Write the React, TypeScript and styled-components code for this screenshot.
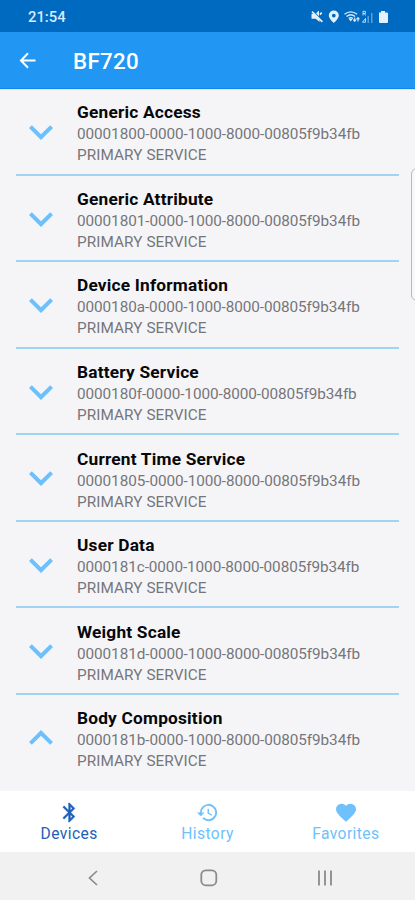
import React from "react";
import styled, { createGlobalStyle } from "styled-components";

const GlobalStyle = createGlobalStyle`
  * { box-sizing: border-box; }
  body { margin: 0; background: #f5f5f8; font-family: Roboto, sans-serif; }
`;

const Screen = styled.div`
  position: relative;
  width: 415px;
  height: 900px;
  overflow: hidden;
  display: flex;
  flex-direction: column;
  background: #f5f5f8;
`;

const StatusBar = styled.header`
  height: 32px;
  flex: none;
  display: flex;
  align-items: center;
  justify-content: space-between;
  padding: 2px 25px 0 28px;
  background: #0069c0;
  color: #d9ecff;
`;

const Clock = styled.span`
  font-size: 14.8px;
  font-weight: 500;
`;

const AppBar = styled.div`
  height: 57px;
  flex: none;
  display: flex;
  align-items: center;
  gap: 37px;
  padding: 2px 0 0 19px;
  background: #2196f3;
  border-bottom: 1px solid #1188ed;
  color: #fff;
`;

const Heading = styled.h1`
  margin: 0;
  font-size: 22.3px;
  line-height: 26px;
  font-weight: 500;
  letter-spacing: 0.3px;
`;

const List = styled.main`
  flex: 1;
  padding: 0 16px;
  border-top: 1px solid #d8e6f8;
`;

const ServiceRow = styled.section<{ $last?: boolean }>`
  height: 86.55px;
  display: flex;
  align-items: flex-start;
  padding-top: 11px;
  border-bottom: ${(p) => (p.$last ? "none" : "2px solid #a3d3f4")};

  &:first-child {
    height: 85.7px;
    padding-top: 10.2px;
  }
`;

const Toggle = styled.div`
  width: 61px;
  padding: 8px 0 0 1px;
  flex: none;
  svg { display: block; }
`;

const ServiceText = styled.div`
  padding-top: 1.2px;
`;

const Name = styled.div`
  font-size: 17.3px;
  line-height: 23px;
  font-weight: 700;
  letter-spacing: 0.2px;
  color: #08080a;
  white-space: nowrap;
`;

const Detail = styled.div<{ $spacing: number }>`
  font-size: 15.3px;
  line-height: 21px;
  letter-spacing: ${(p) => p.$spacing}px;
  color: #75767a;
  white-space: nowrap;
`;

const EdgeHandle = styled.div`
  position: absolute;
  left: 411px;
  top: 168px;
  width: 12px;
  height: 133px;
  border: 1px solid #b9b9bc;
  border-radius: 6px;
  background: #f8f8f9;
`;

const Tabs = styled.nav`
  height: 61px;
  flex: none;
  display: grid;
  grid-template-columns: repeat(3, 1fr);
  background: #fff;
`;

const Tab = styled.div<{ $active?: boolean }>`
  display: flex;
  flex-direction: column;
  align-items: center;
  padding-top: 10px;
  color: ${(p) => (p.$active ? "#2160b8" : "#6fc1fb")};
`;

const TabLabel = styled.span`
  font-size: 15.6px;
  line-height: 20px;
  letter-spacing: 0.42px;
`;

const SystemNav = styled.footer`
  height: 48px;
  flex: none;
  display: flex;
  align-items: center;
  justify-content: space-between;
  padding: 3px 81px 0 84px;
  background: #f1f1f1;
  color: #8b8b8b;
`;

const services = [
  ["Generic Access", "00001800"],
  ["Generic Attribute", "00001801"],
  ["Device Information", "0000180a"],
  ["Battery Service", "0000180f"],
  ["Current Time Service", "00001805"],
  ["User Data", "0000181c"],
  ["Weight Scale", "0000181d"],
  ["Body Composition", "0000181b"],
];

const Chevron = ({ up }: { up: boolean }) => (
  <svg width="48" height="48" viewBox="0 0 24 24" fill="#6cc0fb">
    {up ? (
      <path d="M7.41 15.41 12 10.83l4.59 4.58L18 14l-6-6-6 6z" />
    ) : (
      <path d="M7.41 8.59 12 13.17l4.59-4.58L18 10l-6 6-6-6z" />
    )}
  </svg>
);

const StatusIcons = () => (
  <svg width="80" height="16" viewBox="0 0 80 16" fill="#e3f1ff" stroke="none">
    <path d="M1.5 5h3.5l4.5 4.5V13L5.7 9.8H1.5zM6 4.2 9 1.6v5.6z" />
    <path d="m2 2.6 10.4 10.2M9.9 5.6l1.8-2" stroke="#e3f1ff" strokeWidth="1.7" />
    <path fillRule="evenodd" d="M23.8 1.5a5 5 0 0 0-5 5c0 3.4 5 7.5 5 7.5s5-4.1 5-7.5a5 5 0 0 0-5-5m0 3.2a1.9 1.9 0 1 1 0 3.8 1.9 1.9 0 0 1 0-3.8" />
    <g fill="none" stroke="#d4eaff" strokeWidth="1.4">
      <path d="M34.5 5.2q6.3-4.7 12.6 0M36.5 7.5q4.3-3.4 8.6 0M38.7 9.6q2-1.8 4.2 0" />
      <path d="M44.7 12V8.5M43.3 10.7l1.4 1.6 1.4-1.6M48 12.4V9M46.6 10.3 48 8.7l1.4 1.6" strokeWidth="1.1" />
    </g>
    <path d="m38.8 10 2 2.5 1.7-2.5z" />
    <path d="M53 6.5V2.3h2.4v2.2H53M55.5 6.5l-1-2M52.5 13.2h3V9.5z" fill="none" stroke="#bcdcfa" />
    <path d="M57.5 7h1.5v7h-1.5zM61 4h1.5v10H61z" opacity=".4" />
    <path d="M69 3.5h2V2h4v1.5h2q1 0 1 1V13q0 1-1 1h-7q-1 0-1-1z" />
  </svg>
);

const BluetoothIcon = () => (
  <svg width="23" height="23" viewBox="0 0 24 24" fill="currentColor" stroke="currentColor" strokeWidth=".4">
    <path d="M17.71 7.71 12 2h-1v7.59L6.41 5 5 6.41 10.59 12 5 17.59 6.41 19 11 14.41V22h1l5.71-5.71-4.3-4.29zM13 5.83l1.88 1.88L13 9.59zm1.88 10.46L13 18.17v-3.76z" />
  </svg>
);

const HistoryIcon = () => (
  <svg width="23" height="23" viewBox="0 0 24 24" fill="currentColor">
    <path d="M13 3a9 9 0 0 0-9 9H1l3.89 3.89.07.14L9 12H6a7 7 0 1 1 2.06 4.94l-1.42 1.42A9 9 0 1 0 13 3m-1 5v5l4.25 2.52.77-1.29-3.52-2.09V8z" />
  </svg>
);

const HeartIcon = () => (
  <svg width="24" height="23" viewBox="0 0 24 23" fill="currentColor">
    <path d="m12 20.8-1.45-1.32C5.4 14.8 2 11.7 2 8a5.4 5.4 0 0 1 5.5-5.3c1.74 0 3.41.8 4.5 2.04A6 6 0 0 1 16.5 2.7 5.4 5.4 0 0 1 22 8c0 3.7-3.4 6.8-8.55 11.5z" />
  </svg>
);

export default function App() {
  return (
    <>
      <GlobalStyle />
      <Screen>
        <StatusBar>
          <Clock>21:54</Clock>
          <StatusIcons />
        </StatusBar>
        <AppBar>
          <svg width="17" height="18" viewBox="0 0 17 18" fill="none" stroke="#fff" strokeWidth="2">
            <path d="M16.5 8.5h-14M9 1.3 2 8.5l7 7.2" />
          </svg>
          <Heading>BF720</Heading>
        </AppBar>
        <List>
          {services.map(([name, id], i) => (
            <ServiceRow key={id} $last={i === services.length - 1}>
              <Toggle>
                <Chevron up={i === services.length - 1} />
              </Toggle>
              <ServiceText>
                <Name>{name}</Name>
                <Detail $spacing={-0.07}>{id}-0000-1000-8000-00805f9b34fb</Detail>
                <Detail $spacing={0.08}>PRIMARY SERVICE</Detail>
              </ServiceText>
            </ServiceRow>
          ))}
        </List>
        <EdgeHandle />
        <Tabs>
          <Tab $active>
            <BluetoothIcon />
            <TabLabel>Devices</TabLabel>
          </Tab>
          <Tab>
            <HistoryIcon />
            <TabLabel>History</TabLabel>
          </Tab>
          <Tab>
            <HeartIcon />
            <TabLabel>Favorites</TabLabel>
          </Tab>
        </Tabs>
        <SystemNav>
          <svg width="18" height="18" viewBox="0 0 18 18" fill="none" stroke="currentColor" strokeWidth="1.7">
            <path d="M13 2 5.5 9l7.5 7" />
          </svg>
          <svg width="18" height="18" viewBox="0 0 18 18" fill="none" stroke="currentColor" strokeWidth="1.8">
            <rect x="1.3" y="1.3" width="15" height="15" rx="4.5" />
          </svg>
          <svg width="18" height="18" viewBox="0 0 18 18" fill="none" stroke="currentColor" strokeWidth="1.8">
            <path d="M3 1.5v15M9 1.5v15M15 1.5v15" />
          </svg>
        </SystemNav>
      </Screen>
    </>
  );
}
